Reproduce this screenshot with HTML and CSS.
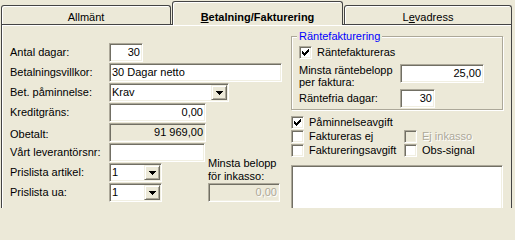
FILE: index.html
```html
<!DOCTYPE html>
<html lang="sv">
<head>
<meta charset="utf-8">
<title>Betalning/Fakturering</title>
<link rel="stylesheet" href="styles.css">
</head>
<body>
<div class="tabs">
  <div class="tab tab-general">Allmänt</div>
  <div class="tab tab-active"><u>B</u>etalning/Fakturering</div>
  <div class="tab tab-address">L<u>e</u>vadress</div>
</div>
<div class="page">
  <div class="form">
    <div class="lbl">Antal dagar:</div>
    <div class="edit num w-days">30</div>

    <div class="lbl">Betalningsvillkor:</div>
    <div class="edit w-terms">30 Dagar netto</div>

    <div class="lbl">Bet. påminnelse:</div>
    <div class="combo w-remind"><span class="combo-text">Krav</span><span class="drop"><svg width="7" height="4" viewBox="0 0 7 4" shape-rendering="crispEdges"><path d="M0 0H7V1H6V2H5V3H4V4H3V3H2V2H1V1H0Z" fill="#000"/></svg></span></div>

    <div class="lbl">Kreditgräns:</div>
    <div class="edit num w-credit">0,00</div>

    <div class="lbl lbl-low">Obetalt:</div>
    <div class="edit num readonly w-credit">91 969,00</div>

    <div class="lbl">Vårt leverantörsnr:</div>
    <div class="edit w-supplier"></div>

    <div class="lbl">Prislista artikel:</div>
    <div class="combo w-price"><span class="combo-text">1</span><span class="drop"><svg width="7" height="4" viewBox="0 0 7 4" shape-rendering="crispEdges"><path d="M0 0H7V1H6V2H5V3H4V4H3V3H2V2H1V1H0Z" fill="#000"/></svg></span></div>

    <div class="lbl">Prislista ua:</div>
    <div class="combo w-price"><span class="combo-text">1</span><span class="drop"><svg width="7" height="4" viewBox="0 0 7 4" shape-rendering="crispEdges"><path d="M0 0H7V1H6V2H5V3H4V4H3V3H2V2H1V1H0Z" fill="#000"/></svg></span></div>

    <div class="mid">
      <div class="mid-label">Minsta belopp<br>för inkasso:</div>
      <div class="edit num readonly disabled w-min">0,00</div>
    </div>
  </div>

  <div class="side">
    <div class="group">
      <span class="legend">Räntefakturering</span>
      <div class="grow g1">
        <span class="cb"><svg width="7" height="7" viewBox="0 0 7 7" shape-rendering="crispEdges"><path d="M0 2H1V3H2V4H3V3H4V2H5V1H6V0H7V3H6V4H5V5H4V6H3V7H2V6H1V5H0Z" fill="#000"/></svg></span>
        <span>Räntefaktureras</span>
      </div>
      <div class="grow g2">
        <div class="glbl two">Minsta räntebelopp<br>per faktura:</div>
        <div class="edit num w-rate">25,00</div>
      </div>
      <div class="grow g3">
        <div class="glbl">Räntefria dagar:</div>
        <div class="edit num w-free">30</div>
      </div>
    </div>

    <div class="checks">
      <div class="cbrow"><span class="cb"><svg width="7" height="7" viewBox="0 0 7 7" shape-rendering="crispEdges"><path d="M0 2H1V3H2V4H3V3H4V2H5V1H6V0H7V3H6V4H5V5H4V6H3V7H2V6H1V5H0Z" fill="#000"/></svg></span><span>Påminnelseavgift</span></div>
      <div></div>
      <div class="cbrow"><span class="cb"></span><span>Faktureras ej</span></div>
      <div class="cbrow off"><span class="cb"></span><span>Ej inkasso</span></div>
      <div class="cbrow"><span class="cb"></span><span>Faktureringsavgift</span></div>
      <div class="cbrow"><span class="cb"></span><span>Obs-signal</span></div>
    </div>

    <div class="edit memo"></div>
  </div>
</div>
</body>
</html>
```
FILE: styles.css
```css
* { box-sizing: border-box; }
html {
  margin: 0;
  padding: 0;
  overflow: hidden;
  background: #ece9d8;
}
body {
  margin: 0;
  padding: 0;
  width: 515px;
  height: 208px;
  overflow: hidden;
  background: #ece9d8;
  font-family: "Liberation Sans", Arial, sans-serif;
  font-size: 11px;
  line-height: 13px;
  color: #000;
}

/* tabs */
.tabs {
  display: flex;
  align-items: flex-end;
  height: 24px;
  padding-left: 1px;
  position: relative;
  z-index: 2;
}
.tab {
  height: 19px;
  padding-top: 5px;
  text-align: center;
  white-space: nowrap;
  border: 1px solid #444;
  border-bottom: none;
  border-radius: 3px 3px 0 0;
  box-shadow: inset 1px 1px 0 #fff;
  background: #ece9d8;
}
.tab u { text-decoration: underline; text-underline-offset: 1px; }
.tab-general { width: 170px; }
.tab-active {
  width: 171px;
  margin-left: 1px;
  height: 24px;
  margin-bottom: -1px;
  padding-top: 9px;
  font-weight: bold;
}
.tab-address { width: 168px; margin-left: 1px; }

/* page */
.page {
  position: relative;
  z-index: 1;
  margin-left: 1px;
  width: 511px;
  height: 184px;
  border: 1px solid #444;
  border-bottom: none;
  box-shadow: inset 1px 1px 0 #fff;
  display: flex;
  align-items: flex-start;
  overflow: hidden;
}

.form {
  display: grid;
  grid-template-columns: 99px 99px 74px;
  grid-template-rows: repeat(8, 20px);
  padding: 18px 0 0 8px;
}
.lbl {
  grid-column: 1;
  height: 19px;
  line-height: 19px;
  white-space: nowrap;
}
.lbl-low { line-height: 22px; }

/* sunken edit */
.edit {
  height: 19px;
  background: #fff;
  border: 1px solid;
  border-color: #aca899 #fff #fff #aca899;
  box-shadow: inset 1px 1px 0 #716f64, inset -1px -1px 0 #f1efe2;
  padding: 0 2px;
  line-height: 17px;
  white-space: nowrap;
  overflow: hidden;
}
.num { text-align: right; }
.readonly { background: #ece9d8; }
.disabled { color: #aca899; text-shadow: 1px 1px 0 #fff; }

.form .edit, .form .combo { grid-column: 2; }
.w-days { width: 34px; }
.form .w-terms { grid-column: 2 / 4; width: 173px; }
.w-remind { width: 120px; }
.w-credit { width: 97px; }
.w-supplier { width: 96px; }
.w-price { width: 53px; }
.w-min { width: 72px; }

/* combo */
.combo {
  display: flex;
  height: 19px;
  background: #fff;
  border: 1px solid;
  border-color: #aca899 #fff #fff #aca899;
  box-shadow: inset 1px 1px 0 #716f64, inset -1px -1px 0 #f1efe2;
  padding: 1px 1px 1px 2px;
  line-height: 15px;
  white-space: nowrap;
}
.combo-text { flex: 1; }
.drop {
  width: 16px;
  height: 15px;
  flex: none;
  display: flex;
  align-items: center;
  justify-content: center;
  background: #ece9d8;
  border: 1px solid;
  border-color: #f1efe2 #716f64 #716f64 #f1efe2;
  box-shadow: inset 1px 1px 0 #fff, inset -1px -1px 0 #aca899;
}
.drop svg { display: block; }

/* middle block */
.mid {
  grid-column: 3;
  grid-row: 6 / span 3;
  display: flex;
  flex-direction: column;
  justify-content: flex-end;
  padding-bottom: 1px;
}
.mid-label { line-height: 13px; white-space: nowrap; }
.mid .edit { grid-column: auto; }

/* right side */
.side {
  margin-left: 9px;
  width: 212px;
}
.group {
  margin-top: 11px;
  border: 1px solid #aca899;
  box-shadow: inset 1px 1px 0 #fff, 1px 1px 0 #fff;
  padding: 0 0 1px 7px;
}
.legend {
  display: block;
  width: fit-content;
  margin: -7px 0 0 -2px;
  padding: 0 2px;
  background: #ece9d8;
  color: #0000ff;
  line-height: 13px;
}
.grow { display: flex; align-items: center; white-space: nowrap; }
.g1 { margin-top: 2px; height: 14px; gap: 5px; }
.g2 { margin-top: 5px; align-items: flex-start; }
.g3 { margin-top: 1px; }
.glbl { width: 101px; flex: none; }
.glbl.two { line-height: 12px; }
.w-rate { width: 84px; }
.w-free { width: 35px; }

/* checkbox */
.cb {
  width: 13px;
  height: 13px;
  flex: none;
  padding: 2px;
  background: #fff;
  border: 1px solid;
  border-color: #aca899 #fff #fff #aca899;
  box-shadow: inset 1px 1px 0 #716f64, inset -1px -1px 0 #f1efe2;
}
.cb svg { display: block; }

.checks {
  margin-top: 5px;
  display: grid;
  grid-template-columns: 113px auto;
  grid-auto-rows: 14px;
}
.cbrow { display: flex; align-items: center; gap: 5px; white-space: nowrap; }
.cbrow.off { color: #aca899; text-shadow: 1px 1px 0 #fff; }
.cbrow.off .cb { background: #ece9d8; }

.memo {
  margin-top: 8px;
  height: 60px;
}
```
